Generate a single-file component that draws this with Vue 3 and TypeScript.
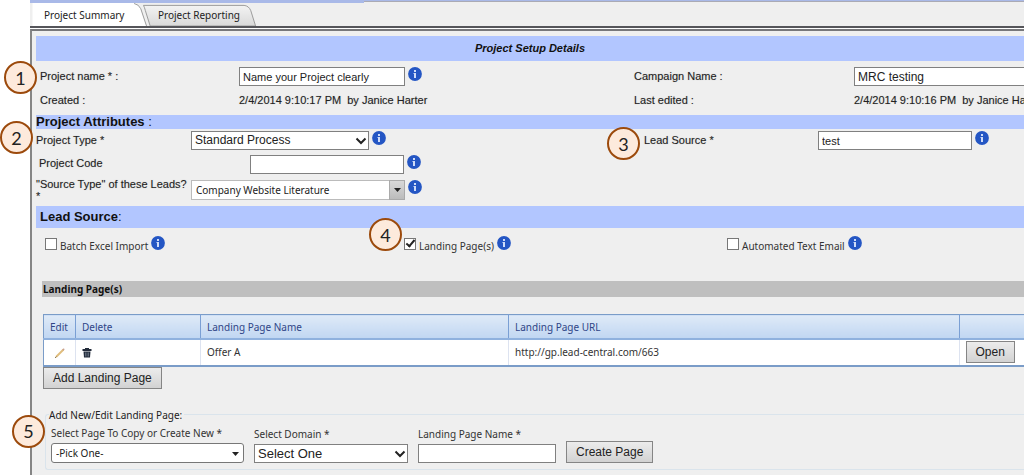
<script setup lang="ts">
import { ref, defineComponent, h } from 'vue'

const InfoIcon = defineComponent({
  setup() {
    return () =>
      h('svg', { width: 14, height: 14, viewBox: '0 0 14 14', role: 'img', 'aria-label': 'Information' }, [
        h('circle', { cx: 7, cy: 7, r: 6.9, fill: '#2456c4' }),
        h('path', { d: 'M6 3h2v2H6zM5.5 6H8v5H6V7h-.5z', fill: '#cfdcf8' }),
      ])
  },
})

const projectName = ref('Name your Project clearly')
const campaignName = ref('MRC testing')
const leadSource = ref('test')
const projectCode = ref('')
const pageName = ref('')

interface Channel {
  id: string
  label: string
  checked: boolean
  step?: number
}
const channels = ref<Channel[]>([
  { id: 'batch', label: 'Batch Excel Import', checked: false },
  { id: 'landing', label: 'Landing Page(s)', checked: true, step: 4 },
  { id: 'email', label: 'Automated Text Email', checked: false },
])
const pages = ref([{ name: 'Offer A', url: 'http://gp.lead-central.com/663' }])
</script>

<template>
  <div class="page">
    <div class="strip"><span class="strip-lead"></span></div>
    <nav class="tabs">
      <a href="#summary" class="tab tab-active" aria-current="page">
        <svg class="tab-shape" width="120" height="24" viewBox="0 0 120 24" aria-hidden="true">
          <path d="M0 0H106Q111 1 113 6L119 24H0Z" fill="#fff" />
          <path d="M106 .5Q111 1.500 113 6L119 24" fill="none" stroke="#999" />
        </svg>
        <span>Project Summary</span>
      </a>
      <a href="#reporting" class="tab tab-rear">
        <svg class="tab-shape" width="120" height="24" viewBox="0 0 120 24" aria-hidden="true">
          <defs>
            <linearGradient id="rear" x1="0" y1="0" x2="0" y2="1">
              <stop offset="0" stop-color="#f3f3f3" />
              <stop offset="1" stop-color="#d9d9d9" />
            </linearGradient>
          </defs>
          <path d="M1 2.500H106Q111 3 113 8L118 24H8L3 8Q2 4 1 2.500" fill="url(#rear)" stroke="#999" />
        </svg>
        <span>Project Reporting</span>
      </a>
    </nav>

    <main class="panel">
      <h1 class="bar title">Project Setup Details</h1>

      <section class="summary">
        <span class="step step-1">1</span>
        <label class="name" for="project-name">Project name * :</label>
        <div class="control">
          <input id="project-name" v-model="projectName" class="box w-name" type="text" />
          <InfoIcon class="info" />
        </div>
        <label class="name" for="campaign">Campaign Name :</label>
        <div class="control">
          <input id="campaign" v-model="campaignName" class="box large wide" type="text" />
        </div>
        <span class="stamp">Created :</span>
        <span class="stamp">2/4/2014 9:10:17 PM&nbsp; by Janice Harter</span>
        <span class="stamp">Last edited :</span>
        <span class="stamp">2/4/2014 9:10:16 PM&nbsp; by Janice Harter</span>
      </section>

      <h2 class="bar attributes-title">Project Attributes <span class="light">:</span></h2>

      <section class="attributes">
        <span class="step step-2">2</span>
        <label class="name" for="type">Project Type *</label>
        <div class="control">
          <span class="picker w-type">
            <select id="type" class="box large"><option>Standard Process</option></select>
            <svg class="chevron" width="12" height="8" viewBox="0 0 12 8" aria-hidden="true"><path d="M1.500 1.500L6 6L10.500 1.500" /></svg>
          </span>
          <InfoIcon class="info" />
        </div>
        <label class="name with-step" for="source"><span class="step step-3">3</span>Lead Source *</label>
        <div class="control">
          <input id="source" v-model="leadSource" class="box w-source" type="text" />
          <InfoIcon class="info" />
        </div>

        <label class="name inset" for="code">Project Code</label>
        <div class="control shifted">
          <input id="code" v-model="projectCode" class="box w-source" type="text" />
          <InfoIcon class="info" />
        </div>
        <span></span><span></span>

        <label class="name two-line" for="source-type">"Source Type" of these Leads?<br />*</label>
        <div class="control">
          <span class="picker w-combo">
            <select id="source-type" class="combo gray-edge"><option>Company Website Literature</option></select>
            <span class="combo-button"><svg width="7" height="4" viewBox="0 0 7 4" aria-hidden="true"><path d="M0 0H7L3.500 4Z" fill="#222" /></svg></span>
          </span>
          <InfoIcon class="info" />
        </div>
      </section>

      <h2 class="bar lead-title">Lead Source<span class="light">:</span></h2>

      <section class="channels">
        <div v-for="c in channels" :key="c.id" class="channel">
          <span v-if="c.step" class="step step-4">{{ c.step }}</span>
          <input :id="c.id" v-model="c.checked" class="tick" type="checkbox" />
          <label :for="c.id">{{ c.label }}</label>
          <InfoIcon class="info" />
        </div>
      </section>

      <section class="landing">
        <h3 class="landing-title">Landing Page(s)</h3>
        <table class="grid">
          <colgroup><col class="c-edit" /><col class="c-delete" /><col class="c-name" /><col /><col class="c-open" /></colgroup>
          <thead>
            <tr><th>Edit</th><th>Delete</th><th>Landing Page Name</th><th>Landing Page URL</th><th></th></tr>
          </thead>
          <tbody>
            <tr v-for="p in pages" :key="p.url">
              <td class="center">
                <button class="icon" type="button" aria-label="Edit">
                  <svg width="12" height="12" viewBox="0 0 12 12"><path d="M2 10L9.500 2.500" stroke="#e0bd7c" stroke-width="2" /><path d="M9 2L10 3" stroke="#c8a090" stroke-width="2" /><path d="M1 11L2.500 9.500" stroke="#8b7b5c" /></svg>
                </button>
              </td>
              <td>
                <button class="icon" type="button" aria-label="Delete">
                  <svg width="10" height="10" viewBox="0 0 10 10"><path d="M3 0H7V1H9.500V3H.5V1H3Z" fill="#222b3a" /><path d="M1.500 3.500H8.500L8 9.500H2Z" fill="#222b3a" /><path d="M3.500 4.500V8.500M5 4.500V8.500M6.500 4.500V8.500" stroke="#8791a1" stroke-width=".6" /></svg>
                </button>
              </td>
              <td>{{ p.name }}</td>
              <td>{{ p.url }}</td>
              <td><button class="push" type="button">Open</button></td>
            </tr>
          </tbody>
        </table>
        <button class="push" type="button">Add Landing Page</button>

        <fieldset class="editor">
          <legend>Add New/Edit Landing Page:</legend>
          <span class="step step-5">5</span>
          <div class="field w-pick">
            <label for="copy">Select Page To Copy or Create New *</label>
            <span class="picker">
              <select id="copy" class="combo rounded"><option>-Pick One-</option></select>
              <svg class="caret" width="7" height="4" viewBox="0 0 7 4" aria-hidden="true"><path d="M0 0H7L3.500 4Z" fill="#222" /></svg>
            </span>
          </div>
          <div class="field w-domain">
            <label for="domain">Select Domain *</label>
            <span class="picker">
              <select id="domain" class="box larger"><option>Select One</option></select>
              <svg class="chevron" width="12" height="8" viewBox="0 0 12 8" aria-hidden="true"><path d="M1.500 1.500L6 6L10.500 1.500" /></svg>
            </span>
          </div>
          <div class="field w-page">
            <label for="page-name">Landing Page Name *</label>
            <input id="page-name" v-model="pageName" class="box" type="text" />
          </div>
          <button class="push" type="button">Create Page</button>
        </fieldset>
      </section>
    </main>
  </div>
</template>

<style>
body { margin: 0; background: #fff; }
</style>

<style scoped>
.page {
  box-sizing: border-box;
  display: flex;
  flex-direction: column;
  min-height: 100vh;
  padding-left: 30px;
  overflow: hidden;
  color: #222;
  font: 11px/14px "Liberation Sans", Arial, sans-serif;
}
.page *, .page *::before { box-sizing: border-box; }
h1, h2, h3 { margin: 0; }
.strip { height: 3px; background: #efefef; border-top: 1px solid #a9b9e8; box-shadow: inset 0 1px #aaaab4; }
.strip-lead { display: block; width: 334px; height: 2px; background: #a9b9e8; }
.tabs { display: flex; height: 25px; background: #efefef; border-bottom: 2px solid #55555a; }
.tab {
  position: relative;
  width: 120px;
  height: 23px;
  padding: 5px 0 0 14px;
  color: #222;
  font: 10px/14px "Noto Sans", "Open Sans", sans-serif;
  text-decoration: none;
  white-space: nowrap;
}
.tab span { position: relative; }
.tab-active { z-index: 1; }
.tab-rear { margin-left: -10px; padding-left: 18px; }
.tab-shape { position: absolute; top: 0; left: 0; height: 23px; }
.panel {
  flex: 1;
  margin-top: 1px;
  padding: 5px 0 4px 4px;
  background: #efefef;
  border-top: 2px solid #77777a;
  border-left: 2px solid #858585;
}
.bar { background: #b2c6ff; color: #111; }
.title { height: 25px; font-size: 11px; line-height: 25px; font-style: italic; text-align: center; }
.name, .stamp { text-shadow: 0 0 1px #8888; white-space: nowrap; }
.control { display: flex; align-items: flex-start; }
.info { flex: none; margin-left: 3px; }
.summary {
  position: relative;
  display: grid;
  grid-template-columns: minmax(0, 199fr) minmax(0, 395fr) minmax(0, 220fr) minmax(0, 170fr);
  grid-template-rows: 30px 24px;
  padding-left: 4px;
}
.summary > .name { padding-top: 8px; }
.summary > .control { padding-top: 6px; }
.summary > .stamp { padding-top: 2px; }
.box {
  width: 100%;
  height: 19px;
  margin: 0;
  padding: 0 3px;
  background: #fff;
  border: 1px solid #808080;
  border-radius: 0;
  color: #222;
  font: 11px/15px "Liberation Sans", Arial, sans-serif;
  appearance: none;
}
.large { font-size: 12px; }
.larger { font-size: 13px; }
.control .w-name { width: 166px; }
.control .w-source { width: 154px; }
.control .wide { width: 100%; border-right: 0; }
.attributes-title { height: 14px; font-size: 13px; line-height: 14px; }
.lead-title { height: 22px; padding-left: 4px; font-size: 13px; line-height: 22px; }
.light { font-weight: normal; }
.attributes {
  position: relative;
  display: grid;
  grid-template-columns: minmax(0, 155fr) minmax(0, 453fr) minmax(0, 174fr) minmax(0, 206fr);
  grid-template-rows: 24px 25px 28px;
}
.attributes > .name { padding-top: 5px; line-height: 12px; }
.attributes > .inset { padding: 4px 0 0 3px; }
.attributes > .two-line { padding-top: 0; }
.attributes > .control { padding-top: 2px; }
.attributes > .shifted { padding-left: 59px; }
.with-step { position: relative; }
.picker { position: relative; display: block; }
.w-type { width: 178px; }
.w-combo { width: 214px; }
.chevron { position: absolute; top: 6px; right: 2px; fill: none; stroke: #222; stroke-width: 2; pointer-events: none; }
.combo {
  width: 100%;
  height: 20px;
  margin: 0;
  padding: 0 4px;
  background: #fff;
  border: 1px solid #777;
  color: #222;
  font: 10px/18px "Noto Sans", "Open Sans", sans-serif;
  appearance: none;
}
.gray-edge { border-color: #bbb; border-radius: 0; }
.rounded { border-radius: 3px; }
.combo-button {
  position: absolute;
  top: 0;
  right: 0;
  display: grid;
  place-items: center;
  width: 16px;
  height: 20px;
  background: linear-gradient(#d8d8d8, #bcbcbc);
  border: 1px solid #aaa;
  pointer-events: none;
}
.caret { position: absolute; top: 9px; right: 5px; pointer-events: none; }
.channels {
  display: grid;
  grid-template-columns: 359fr 323fr 297fr;
  padding: 8px 0 0 9px;
  font: 10px/16px "Noto Sans", "Open Sans", sans-serif;
}
.channel { position: relative; display: flex; height: 45px; align-items: flex-start; }
.channel label { margin-left: 3px; padding-top: 2px; color: #333; }
.tick {
  flex: none;
  width: 12px;
  height: 12px;
  margin: 2px 0 0;
  background: #fff;
  border: 1px solid #777;
  appearance: none;
}
.tick:checked::before {
  content: "";
  display: block;
  width: 5px;
  height: 9px;
  margin: -1px 0 0 3px;
  border: solid #222;
  border-width: 0 2px 2px 0;
  transform: rotate(40deg);
}
.landing { padding-left: 6px; font: 10px/14px "Noto Sans", "Open Sans", sans-serif; }
.landing > .push { margin-left: 1px; }
.landing-title { height: 16px; margin-bottom: 17px; padding-left: 1px; background: #bfbfbf; color: #111; font-size: 10px; line-height: 16px; }
.grid { width: calc(100% - 1px); margin-left: 1px; table-layout: fixed; border-collapse: collapse; background: #fff; border: 1px solid #7a9cc8; border-right: 0; border-bottom-width: 2px; }
.c-edit { width: 32px; }
.c-delete { width: 125px; }
.c-name { width: 308px; }
.c-open { width: 65px; }
th { height: 24px; padding: 1px 6px 0; background: linear-gradient(#dfeaf7, #c0d6f2); border-right: 1px solid #7a9fd4; border-bottom: 2px solid #8fb1de; color: #2f4587; font-weight: normal; text-align: left; white-space: nowrap; }
td { height: 27px; padding: 0 6px; border-right: 1px solid #dde3f0; color: #333; }
th:last-child, td:last-child { border-right: 0; }
.center { text-align: center; }
.icon { display: inline-block; margin: 0; padding: 0; background: none; border: 0; line-height: 0; vertical-align: middle; }
.push {
  display: block;
  height: 22px;
  padding: 0 9px;
  background: linear-gradient(#ececec, #d2d2d2);
  border: 1px solid #858585;
  border-radius: 0;
  color: #222;
  font: 12px/18px "Liberation Sans", Arial, sans-serif;
  white-space: nowrap;
}
.editor {
  position: relative;
  display: flex;
  align-items: flex-end;
  gap: 10px;
  min-width: 0;
  margin: 19px 0 0 3px;
  padding: 4px 5px 6px;
  border: 1px solid #dae4ec;
  border-right: 0;
  border-radius: 3px 0 0 3px;
}
.editor legend { margin-left: -2px; padding: 0 2px 0 0; color: #222; }
.field { display: flex; flex-direction: column; gap: 3px; }
.field label { white-space: nowrap; color: #333; }
.w-pick { width: 193px; }
.w-domain { width: 154px; }
.w-page { width: 138px; }
.step {
  position: absolute;
  z-index: 2;
  display: grid;
  place-items: center;
  width: 33px;
  height: 33px;
  background: #fdeadc;
  border: 2px solid #9c4a0c;
  border-radius: 50%;
  color: #222;
  font: 18px/28px Lato, "Open Sans", sans-serif;
  text-shadow: none;
}
.step-1 { top: 0; left: -32px; }
.step-2 { top: -8px; left: -36px; }
.step-3 { top: -2px; left: -37px; }
.step-4 { top: -18px; left: -35px; }
.step-5 { top: -7px; left: -34px; }
</style>
